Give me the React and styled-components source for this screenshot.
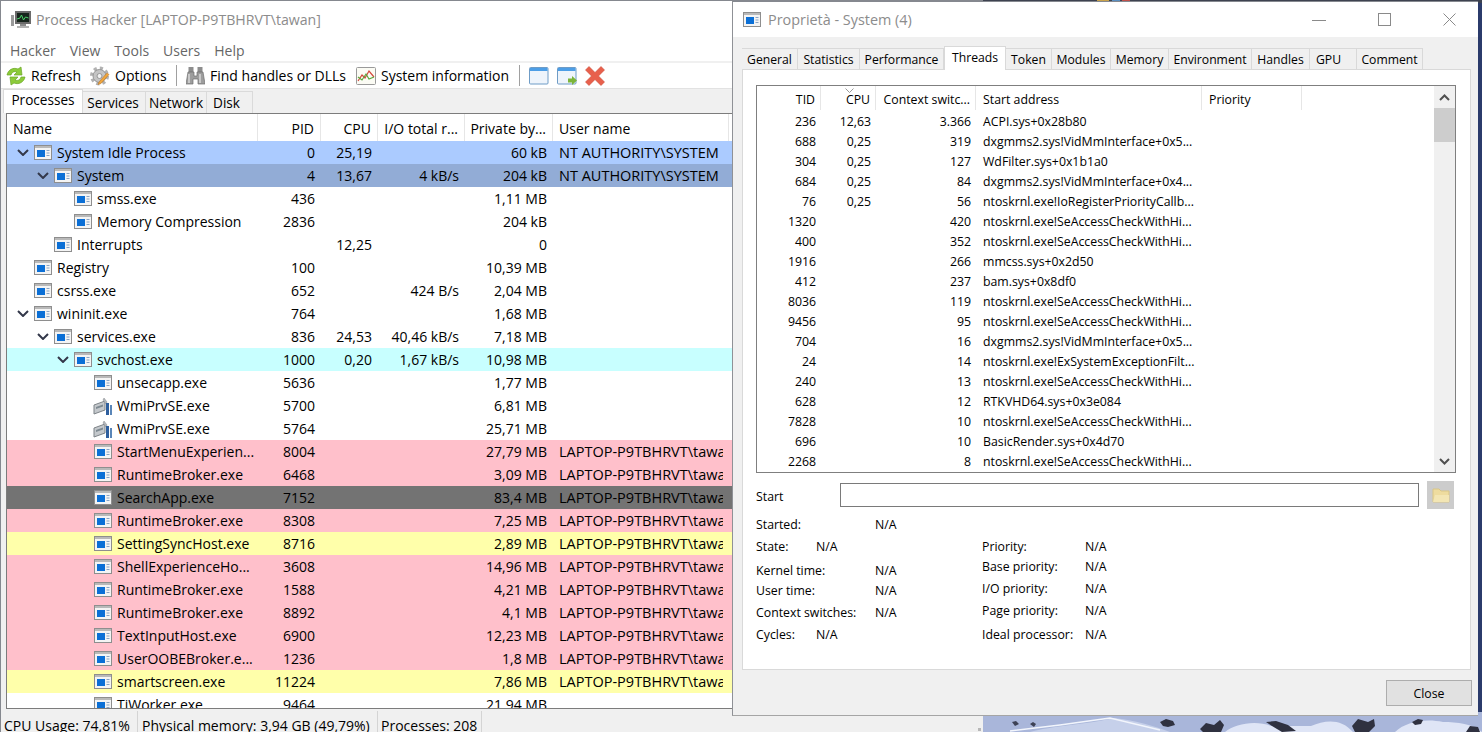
import styled, { createGlobalStyle } from "styled-components";

const GlobalStyle = createGlobalStyle`
  html, body {
    margin: 0;
    padding: 0;
    overflow: hidden;
    background: #2b3b6b;
  }
  * {
    box-sizing: border-box;
  }
`;

const UI_FONT = `"Open Sans", "Noto Sans", "Liberation Sans", sans-serif`;

const Desktop = styled.div`
  position: relative;
  width: 1482px;
  height: 732px;
  overflow: hidden;
  font-family: ${UI_FONT};
  color: #000;
`;

const Wallpaper = styled.svg`
  position: absolute;
  inset: 0;
`;

/* main window */
const MainWindow = styled.div`
  position: absolute;
  left: 0;
  top: 0;
  width: 983px;
  height: 732px;
  display: flex;
  flex-direction: column;
  background: #f0f0f0;
  border-top: 1px solid #85888f;
  border-left: 1px solid #85888f;
  font-size: 14px;
`;

const TitleBar = styled.div`
  height: ${(p) => p.$h}px;
  flex: none;
  display: flex;
  align-items: center;
  background: #fff;
  color: #8c8c8c;
  font-size: ${(p) => p.$size}px;
  padding-left: ${(p) => p.$pad}px;
  padding-bottom: ${(p) => p.$bottom}px;
  gap: ${(p) => p.$gap}px;
`;

const MenuBar = styled.div`
  height: 23px;
  flex: none;
  display: flex;
  align-items: center;
  background: #fff;
  padding: 2px 0 0 9px;
  gap: 14px;
  color: #666;
  margin-bottom: 2px;
`;

const Toolbar = styled.div`
  height: 26px;
  flex: none;
  display: flex;
  align-items: center;
  background: #fff;
  border-bottom: 1px solid #e2e2e2;
  padding-left: 5px;
`;

const ToolItem = styled.div`
  display: flex;
  align-items: center;
  gap: 5px;
  width: ${(p) => p.$w}px;
  flex: none;
  white-space: nowrap;
`;

const ToolSep = styled.div`
  width: 1px;
  height: 21px;
  background: #a0a0a0;
  flex: none;
  margin-right: ${(p) => p.$right}px;
`;

const MainTabs = styled.div`
  height: 24px;
  flex: none;
  display: flex;
  align-items: flex-end;
  padding-left: 2px;
`;

const MainTab = styled.div`
  height: ${(p) => (p.$active ? 24 : 22)}px;
  width: ${(p) => p.$w}px;
  flex: none;
  display: flex;
  align-items: center;
  justify-content: center;
  padding-bottom: ${(p) => (p.$active ? 4 : 1)}px;
  padding-right: ${(p) => p.$right || 0}px;
  background: ${(p) => (p.$active ? "#fff" : "#f0f0f0")};
  border: 1px solid #dadada;
  border-bottom: none;
  border-left-width: ${(p) => (p.$active ? 1 : 0)}px;
  font-size: 13.6px;
`;

const Tree = styled.div`
  flex: 1;
  min-height: 0;
  margin-left: 5px;
  background: #fff;
  border-top: 1px solid #7c7c7c;
  border-left: 1px solid #7c7c7c;
  border-bottom: 1px solid #7c7c7c;
  overflow: hidden;
`;

const TREE_COLS = "251px 63px 57px 87px 88px 176px 1fr";

const TreeHead = styled.div`
  display: grid;
  grid-template-columns: ${TREE_COLS};
  height: 27px;
`;

const HeadCell = styled.div`
  display: flex;
  align-items: center;
  justify-content: ${(p) => (p.$left ? "flex-start" : "flex-end")};
  padding: 2px 6px 0;
  border-right: 1px solid #e6e6e6;
  white-space: nowrap;
  overflow: hidden;
`;

const TreeRow = styled.div`
  display: grid;
  grid-template-columns: ${TREE_COLS};
  height: 23px;
  background: ${(p) => p.$bg};
`;

const NameCell = styled.div`
  display: flex;
  align-items: center;
  padding-left: ${(p) => 8 + p.$level * 20}px;
  white-space: nowrap;
  overflow: hidden;
`;

const ArrowSlot = styled.div`
  width: 19px;
  flex: none;
  display: flex;
  align-items: center;
`;

const NameText = styled.span`
  margin-left: 5px;
`;

const ValueCell = styled.div`
  display: flex;
  align-items: center;
  justify-content: ${(p) => (p.$left ? "flex-start" : "flex-end")};
  padding: 0 6px;
  white-space: nowrap;
  overflow: hidden;
`;

const UserText = styled.span`
  display: block;
  width: 164px;
  overflow: hidden;
  font-size: 14.5px;
`;

const StatusBar = styled.div`
  height: 23px;
  flex: none;
  position: relative;
  display: flex;
  padding-top: 2px;
`;

const StatusCell = styled.div`
  width: ${(p) => p.$w}px;
  flex: none;
  height: 21px;
  padding: 6px 0 0 ${(p) => p.$pad}px;
  line-height: 18px;
  border-right: 1px solid #d4d4d4;
  white-space: nowrap;
  overflow: hidden;
`;

const Grip = styled.div`
  position: absolute;
  right: 2px;
  bottom: 1px;
  width: 3px;
  height: 3px;
  background: #b8b8b8;
`;

/* properties window */
const PropsWindow = styled.div`
  position: absolute;
  left: 732px;
  top: 1px;
  width: 746px;
  height: 715px;
  display: flex;
  flex-direction: column;
  background: #f0f0f0;
  border-left: 1px solid #8f9196;
  border-top: 1px solid #85888f;
  border-bottom: 1px solid #a5a5a5;
  font-size: 12.3px;
`;

const WinTitle = styled.span`
  flex: 1;
`;

const WinButton = styled.div`
  width: 58px;
  flex: none;
  display: flex;
  justify-content: center;
`;

const PropTabs = styled.div`
  display: flex;
  align-items: flex-end;
  height: 32px;
  padding-left: 9px;
  flex: none;
  position: relative;
  z-index: 1;
`;

const PropTab = styled.div`
  height: ${(p) => (p.$active ? 24 : 21)}px;
  width: ${(p) => p.$w}px;
  margin-bottom: ${(p) => (p.$active ? -1 : 0)}px;
  flex: none;
  display: flex;
  align-items: center;
  justify-content: ${(p) => (p.$start ? "flex-start" : "center")};
  padding-left: ${(p) => (p.$start ? 6 : 0)}px;
  padding-bottom: ${(p) => (p.$active ? 3 : 0)}px;
  background: ${(p) => (p.$active ? "#fff" : "#f0f0f0")};
  border: 1px solid #d9d9d9;
  border-left-width: ${(p) => (p.$active ? 1 : 0)}px;
  border-bottom: none;
  font-size: 12.2px;
`;

const PropPanel = styled.div`
  height: 601px;
  flex: none;
  margin: 0 7px 0 9px;
  padding: 15px 14px 0 13px;
  background: #fff;
  border: 1px solid #d9d9d9;
`;

const ThreadBox = styled.div`
  height: 388px;
  display: flex;
  border: 1px solid #7f7f7f;
`;

const ThreadList = styled.div`
  flex: 1;
  min-width: 0;
  overflow: hidden;
`;

const THREAD_COLS = "64px 55px 100px 226px 100px";

const ThreadHead = styled.div`
  display: grid;
  grid-template-columns: ${THREAD_COLS};
  height: 24px;
  margin-bottom: 1px;
  position: relative;
`;

const ThreadHeadCell = styled.div`
  display: flex;
  align-items: center;
  justify-content: ${(p) => (p.$left ? "flex-start" : "flex-end")};
  padding: 2px 5px 0 7px;
  border-right: 1px solid #e6e6e6;
  white-space: nowrap;
  overflow: hidden;
`;

const SortMark = styled.svg`
  position: absolute;
  left: 88px;
  top: 2px;
`;

const ThreadRow = styled.div`
  display: grid;
  grid-template-columns: ${THREAD_COLS};
  height: 20px;
`;

const ThreadCell = styled.div`
  display: flex;
  align-items: center;
  justify-content: ${(p) => (p.$left ? "flex-start" : "flex-end")};
  padding: 0 5px 0 7px;
  white-space: nowrap;
  overflow: hidden;
`;

const ScrollTrack = styled.div`
  width: 21px;
  flex: none;
  display: flex;
  flex-direction: column;
  background: #f0f0f0;
`;

const ScrollEnd = styled.div`
  height: 22px;
  flex: none;
  display: flex;
  align-items: center;
  justify-content: center;
`;

const ScrollThumb = styled.div`
  height: 34px;
  flex: none;
  background: #cdcdcd;
`;

const ScrollSpace = styled.div`
  flex: 1;
`;

const StartRow = styled.div`
  display: flex;
  align-items: center;
  height: 28px;
  margin-top: 8px;
`;

const StartLabel = styled.div`
  width: 84px;
  flex: none;
  padding-top: 2px;
`;

const StartInput = styled.div`
  width: 579px;
  height: 24px;
  flex: none;
  border: 1px solid #7a7a7a;
`;

const FolderButton = styled.div`
  width: 27px;
  height: 28px;
  flex: none;
  margin-left: 8px;
  display: flex;
  align-items: center;
  justify-content: center;
  background: #cccccc;
`;

const Details = styled.div`
  display: flex;
  margin-top: 5px;
`;

const DetailColumn = styled.div`
  width: ${(p) => p.$w}px;
  flex: none;
  padding-top: ${(p) => p.$top}px;
`;

const DetailRow = styled.div`
  display: flex;
  align-items: center;
  height: 20px;
  margin-top: ${(p) => p.$gap}px;
  white-space: nowrap;
`;

const DetailLabel = styled.div`
  width: ${(p) => p.$w}px;
  flex: none;
`;

const Footer = styled.div`
  flex: 1;
  display: flex;
  justify-content: flex-end;
  padding: 10px 6px 0 0;
`;

const CloseButton = styled.div`
  width: 86px;
  height: 26px;
  display: flex;
  align-items: center;
  justify-content: center;
  background: #e1e1e1;
  border: 1px solid #adadad;
`;

/* drawings */
const ProcessIcon = () => (
  <svg width="18" height="15" viewBox="0 0 18 15" style={{ flex: "none" }}>
    <rect x="0.5" y="0.5" width="17" height="14" fill="#f4f4f4" stroke="#8e8e8e" />
    <rect x="1" y="1" width="16" height="2" fill="#b9b9b9" />
    <rect x="3" y="5" width="8" height="7" fill="#0b6fd6" />
    <path d="M12.5 5.500h3M12.5 8h3M12.5 10.500h3" stroke="#8aa4c4" />
  </svg>
);

const WmiIcon = () => (
  <svg width="20" height="20" viewBox="0 0 20 20" style={{ flex: "none", marginRight: "-1px", marginLeft: "-1px" }}>
    <path d="M1 9l11-4v9L1 18z" fill="#c4c8cc" stroke="#7d8388" />
    <path d="M3 11l7-2.500v2L3 13z" fill="#7e8a92" />
    <path d="M11 2l3 4-1 2-3-4z" fill="#b4b8bc" stroke="#85898d" strokeWidth="0.5" />
    <rect x="13" y="7" width="3" height="12" fill="#2f5f9e" />
    <rect x="17" y="9" width="2" height="10" fill="#5a86b8" />
  </svg>
);

const Chevron = ({ color = "#33384a" }) => (
  <svg width="12" height="7" viewBox="0 0 12 7" style={{ marginLeft: "2px" }}>
    <path d="M1 1l5 5 5-5" fill="none" stroke={color} strokeWidth="2" />
  </svg>
);

const AppIcon = () => (
  <svg width="20" height="19" viewBox="0 0 20 19" style={{ flex: "none" }}>
    <rect x="0" y="5" width="3" height="11" fill="#9a9a9a" />
    <rect x="4" y="1" width="16" height="13" fill="#6b6b6b" />
    <rect x="6" y="3" width="12" height="9" fill="#16251c" />
    <path d="M6 9l3-1 1.500-3 2 5 2-3 3 1" fill="none" stroke="#4bd06a" strokeWidth="1" />
    <rect x="9" y="14" width="6" height="2" fill="#8a8a8a" />
    <rect x="6" y="16" width="12" height="2" fill="#b3b3b3" />
  </svg>
);

const RefreshIcon = () => (
  <svg width="20" height="20" viewBox="0 0 20 20" style={{ flex: "none" }}>
    <path d="M1 9C2 4 7 1 12 3l3-2 1 8-8 0 3-3C8 5 6 6 5 9z" fill="#8ccb3a" stroke="#6aa626" strokeWidth="0.7" />
    <path d="M19 11c-1 5-6 8-11 6l-3 2-1-8 8 0-3 3c3 1 5 0 6-3z" fill="#8ccb3a" stroke="#6aa626" strokeWidth="0.7" />
  </svg>
);

const GearIcon = () => (
  <svg width="20" height="20" viewBox="0 0 20 20" style={{ flex: "none" }}>
    <circle cx="9.500" cy="10" r="7.500" fill="none" stroke="#b2b2b2" strokeWidth="4" strokeDasharray="3 2.900" />
    <circle cx="9.500" cy="10" r="6.500" fill="#c4c4c4" stroke="#969696" />
    <circle cx="9.500" cy="10" r="2.500" fill="#f1f1f1" stroke="#969696" />
    <path d="M9 16l8-9 2 1.500-8 9-3 1z" fill="#f0a63c" stroke="#b9752a" strokeWidth="0.6" />
  </svg>
);

const BinocularsIcon = () => (
  <svg width="19" height="20" viewBox="0 0 19 20" style={{ flex: "none" }}>
    <rect x="2.500" y="1" width="5" height="5" fill="#8d8d8d" />
    <rect x="11.500" y="1" width="5" height="5" fill="#8d8d8d" />
    <path d="M2 6h6v4h3V6h6l2 12h-7v-5H7v5H0z" fill="#9d9d9d" stroke="#6f6f6f" strokeWidth="0.7" />
    <rect x="2" y="8" width="2" height="9" fill="#c9c9c9" />
    <rect x="13" y="8" width="2" height="9" fill="#c9c9c9" />
  </svg>
);

const ChartIcon = () => (
  <svg width="20" height="20" viewBox="0 0 20 20" style={{ flex: "none" }}>
    <rect x="0.500" y="1.500" width="19" height="17" rx="1" fill="#fbfbf4" stroke="#9a9a9a" />
    <path d="M2 15l4-6 3 3 4-7 5 6" fill="none" stroke="#d4483c" strokeWidth="1.200" />
    <path d="M2 11l4 3 4-6 3 5 5-2" fill="none" stroke="#5aa83c" strokeWidth="1.200" />
  </svg>
);

const WindowIcon = ({ arrow }) => (
  <svg width="20" height="18" viewBox="0 0 20 18" style={{ flex: "none" }}>
    <rect x="0.500" y="0.500" width="18.500" height="16.500" rx="1" fill="#eef4fb" stroke="#6f9cc6" />
    <rect x="1" y="1" width="17.500" height="3" fill="#4d9ee6" />
    {arrow && <path d="M11 11.500h4V9l5 4.500-5 4.500v-2.500h-4z" fill="#7cb53a" />}
  </svg>
);

const RedXIcon = () => (
  <svg width="20" height="20" viewBox="0 0 20 20" style={{ flex: "none" }}>
    <path
      d="M4 0.500L10 6.500 16 0.500 19.500 4 13.500 10 19.500 16 16 19.500 10 13.500 4 19.500 0.500 16 6.500 10 0.500 4z"
      fill="#e8604c"
      stroke="#cf4a38"
      strokeWidth="0.6"
    />
  </svg>
);

const FolderIcon = () => (
  <svg width="18" height="16" viewBox="0 0 18 16">
    <path d="M1 2h6l2 2h8v11H1z" fill="#eedc9f" stroke="#d9c687" />
    <path d="M1 15l2-7h14v7z" fill="#f3e6b4" />
  </svg>
);

const PINK = "#ffc0cb";
const YELLOW = "#ffffaa";
const USER = "LAPTOP-P9TBHRVT\\tawan";
const NT = "NT AUTHORITY\\SYSTEM";

const processes = [
  { name: "System Idle Process", level: 0, open: true, pid: "0", cpu: "25,19", mem: "60 kB", user: NT, bg: "#abcbff" },
  { name: "System", level: 1, open: true, pid: "4", cpu: "13,67", io: "4 kB/s", mem: "204 kB", user: NT, bg: "#92acd6" },
  { name: "smss.exe", level: 2, pid: "436", mem: "1,11 MB" },
  { name: "Memory Compression", level: 2, pid: "2836", mem: "204 kB" },
  { name: "Interrupts", level: 1, cpu: "12,25", mem: "0" },
  { name: "Registry", level: 0, pid: "100", mem: "10,39 MB" },
  { name: "csrss.exe", level: 0, pid: "652", io: "424 B/s", mem: "2,04 MB" },
  { name: "wininit.exe", level: 0, open: true, pid: "764", mem: "1,68 MB" },
  { name: "services.exe", level: 1, open: true, pid: "836", cpu: "24,53", io: "40,46 kB/s", mem: "7,18 MB" },
  { name: "svchost.exe", level: 2, open: true, pid: "1000", cpu: "0,20", io: "1,67 kB/s", mem: "10,98 MB", bg: "#c8ffff" },
  { name: "unsecapp.exe", level: 3, pid: "5636", mem: "1,77 MB" },
  { name: "WmiPrvSE.exe", level: 3, wmi: true, pid: "5700", mem: "6,81 MB" },
  { name: "WmiPrvSE.exe", level: 3, wmi: true, pid: "5764", mem: "25,71 MB" },
  { name: "StartMenuExperien...", level: 3, pid: "8004", mem: "27,79 MB", user: USER, bg: PINK },
  { name: "RuntimeBroker.exe", level: 3, pid: "6468", mem: "3,09 MB", user: USER, bg: PINK },
  { name: "SearchApp.exe", level: 3, pid: "7152", mem: "83,4 MB", user: USER, bg: "#737373" },
  { name: "RuntimeBroker.exe", level: 3, pid: "8308", mem: "7,25 MB", user: USER, bg: PINK },
  { name: "SettingSyncHost.exe", level: 3, pid: "8716", mem: "2,89 MB", user: USER, bg: YELLOW },
  { name: "ShellExperienceHo...", level: 3, pid: "3608", mem: "14,96 MB", user: USER, bg: PINK },
  { name: "RuntimeBroker.exe", level: 3, pid: "1588", mem: "4,21 MB", user: USER, bg: PINK },
  { name: "RuntimeBroker.exe", level: 3, pid: "8892", mem: "4,1 MB", user: USER, bg: PINK },
  { name: "TextInputHost.exe", level: 3, pid: "6900", mem: "12,23 MB", user: USER, bg: PINK },
  { name: "UserOOBEBroker.e...", level: 3, pid: "1236", mem: "1,8 MB", user: USER, bg: PINK },
  { name: "smartscreen.exe", level: 3, pid: "11224", mem: "7,86 MB", user: USER, bg: YELLOW },
  { name: "TiWorker.exe", level: 3, pid: "9464", mem: "21,94 MB" },
];

const SEAC = "ntoskrnl.exe!SeAccessCheckWithHi...";

const threads = [
  ["236", "12,63", "3.366", "ACPI.sys+0x28b80"],
  ["688", "0,25", "319", "dxgmms2.sys!VidMmInterface+0x5..."],
  ["304", "0,25", "127", "WdFilter.sys+0x1b1a0"],
  ["684", "0,25", "84", "dxgmms2.sys!VidMmInterface+0x4..."],
  ["76", "0,25", "56", "ntoskrnl.exe!IoRegisterPriorityCallb..."],
  ["1320", "", "420", SEAC],
  ["400", "", "352", SEAC],
  ["1916", "", "266", "mmcss.sys+0x2d50"],
  ["412", "", "237", "bam.sys+0x8df0"],
  ["8036", "", "119", SEAC],
  ["9456", "", "95", SEAC],
  ["704", "", "16", "dxgmms2.sys!VidMmInterface+0x5..."],
  ["24", "", "14", "ntoskrnl.exe!ExSystemExceptionFilt..."],
  ["240", "", "13", SEAC],
  ["628", "", "12", "RTKVHD64.sys+0x3e084"],
  ["7828", "", "10", SEAC],
  ["696", "", "10", "BasicRender.sys+0x4d70"],
  ["2268", "", "8", SEAC],
];

const propTabs = [
  { label: "General", w: 56 },
  { label: "Statistics", w: 62 },
  { label: "Performance", w: 84 },
  { label: "Threads", w: 62, active: true },
  { label: "Token", w: 46 },
  { label: "Modules", w: 59 },
  { label: "Memory", w: 58 },
  { label: "Environment", w: 83 },
  { label: "Handles", w: 58 },
  { label: "GPU", w: 47, start: true },
  { label: "Comment", w: 66 },
];

const leftDetails = [
  ["Started:", 119, 0],
  ["State:", 60, 2],
  ["Kernel time:", 119, 4],
  ["User time:", 119, 0],
  ["Context switches:", 119, 2],
  ["Cycles:", 60, 2],
];

const rightDetails = [
  ["Priority:", 103, 0],
  ["Base priority:", 103, 0],
  ["I/O priority:", 103, 2],
  ["Page priority:", 103, 2],
  ["Ideal processor:", 103, 4],
];

const App = () => {
  return (
    <Desktop>
      <GlobalStyle />
      <Wallpaper width="1482" height="732" viewBox="0 0 1482 732">
        <rect width="1482" height="732" fill="#2b3b6b" />
        <rect width="1482" height="3" fill="#3d4250" />
        <rect x="1097" width="12" height="3" fill="#c9a24a" />
        <rect x="1112" width="8" height="3" fill="#5a8fc0" />
        <rect x="1122" width="8" height="3" fill="#c0504a" />
        <rect x="983" y="712" width="499" height="20" fill="#a9b6da" />
        <path d="M1030 732c20-6 60-8 84-14 20 2 40 8 56 14z" fill="#c6d0ea" />
        <path d="M1010 731l50-6 50-7 50 12" fill="none" stroke="#f2f5fc" strokeWidth="1.500" />
        <path d="M1225 732c10-8 30-12 46-6l40 0c14-6 30-8 42 6z" fill="#dfe5f6" />
        <path d="M1395 732c10-10 30-14 48-10 14 0 30 2 39 10z" fill="#dfe5f6" />
        <path d="M1160 722l6-3 7 2 2 4-7 2-5-1zM1200 729l6-6 8 2 6-5 4 5-3 7h-18zM1266 722l10-1 12 4 8 6-14 1-10-6zM1352 726l6-7 10 3 6-3 1 7-6 6h-14zM1412 722l6-3 5 1-2 4-6 1zM1466 732l4-6 8 1 2 5z" fill="#2f3140" />
        <path d="M1012 722l4-1 3 3-4 2zM1030 724l3-2 3 2-2 3z" fill="#3d4154" />
      </Wallpaper>

      <MainWindow>
        <TitleBar $h={37} $size={14.15} $pad={10} $gap={5} $bottom={1}>
          <AppIcon />
          <span>Process Hacker [LAPTOP-P9TBHRVT\tawan]</span>
        </TitleBar>
        <MenuBar>
          <span>Hacker</span>
          <span>View</span>
          <span>Tools</span>
          <span>Users</span>
          <span>Help</span>
        </MenuBar>
        <Toolbar>
          <ToolItem $w={84}>
            <RefreshIcon />
            Refresh
          </ToolItem>
          <ToolItem $w={86}>
            <GearIcon />
            Options
          </ToolItem>
          <ToolSep $right={9} />
          <ToolItem $w={170}>
            <BinocularsIcon />
            Find handles or DLLs
          </ToolItem>
          <ToolItem $w={163}>
            <ChartIcon />
            System information
          </ToolItem>
          <ToolSep $right={9} />
          <ToolItem $w={28}>
            <WindowIcon />
          </ToolItem>
          <ToolItem $w={28}>
            <WindowIcon arrow />
          </ToolItem>
          <ToolItem $w={28}>
            <RedXIcon />
          </ToolItem>
        </Toolbar>
        <MainTabs>
          <MainTab $active $w={80}>Processes</MainTab>
          <MainTab $w={63} $right={2}>Services</MainTab>
          <MainTab $w={61}>Network</MainTab>
          <MainTab $w={46} $right={6}>Disk</MainTab>
        </MainTabs>
        <Tree>
          <TreeHead>
            <HeadCell $left>Name</HeadCell>
            <HeadCell>PID</HeadCell>
            <HeadCell>CPU</HeadCell>
            <HeadCell>I/O total r...</HeadCell>
            <HeadCell>Private by...</HeadCell>
            <HeadCell $left>User name</HeadCell>
            <span />
          </TreeHead>
          {processes.map((p, i) => (
            <TreeRow key={i} $bg={p.bg || "#fff"}>
              <NameCell $level={p.level}>
                <ArrowSlot>{p.open && <Chevron />}</ArrowSlot>
                {p.wmi ? <WmiIcon /> : <ProcessIcon />}
                <NameText>{p.name}</NameText>
              </NameCell>
              <ValueCell>{p.pid}</ValueCell>
              <ValueCell>{p.cpu}</ValueCell>
              <ValueCell>{p.io}</ValueCell>
              <ValueCell>{p.mem}</ValueCell>
              <ValueCell $left>
                <UserText>{p.user}</UserText>
              </ValueCell>
            </TreeRow>
          ))}
        </Tree>
        <StatusBar>
          <StatusCell $w={137} $pad={3}>CPU Usage: 74,81%</StatusCell>
          <StatusCell $w={240} $pad={4}>Physical memory: 3,94 GB (49,79%)</StatusCell>
          <StatusCell $w={104} $pad={3}>Processes: 208</StatusCell>
          <Grip />
        </StatusBar>
      </MainWindow>

      <PropsWindow>
        <TitleBar $h={35} $size={14.4} $pad={10} $gap={7} $bottom={0}>
          <ProcessIcon />
          <WinTitle>Proprietà - System (4)</WinTitle>
          <WinButton>
            <svg width="14" height="14" viewBox="0 0 14 14">
              <path d="M0 7.500h14" stroke="#8a8a8a" />
            </svg>
          </WinButton>
          <WinButton>
            <svg width="13" height="13" viewBox="0 0 13 13">
              <rect x="0.500" y="0.500" width="12" height="12" fill="none" stroke="#8a8a8a" />
            </svg>
          </WinButton>
          <WinButton>
            <svg width="13" height="13" viewBox="0 0 13 13">
              <path d="M0.500 0.500l12 12M12.500 0.500l-12 12" stroke="#8a8a8a" />
            </svg>
          </WinButton>
        </TitleBar>
        <PropTabs>
          {propTabs.map((t) => (
            <PropTab key={t.label} $w={t.w} $active={t.active} $start={t.start}>
              {t.label}
            </PropTab>
          ))}
        </PropTabs>
        <PropPanel>
          <ThreadBox>
            <ThreadList>
              <ThreadHead>
                <ThreadHeadCell>TID</ThreadHeadCell>
                <ThreadHeadCell>CPU</ThreadHeadCell>
                <ThreadHeadCell>Context switc...</ThreadHeadCell>
                <ThreadHeadCell $left>Start address</ThreadHeadCell>
                <ThreadHeadCell $left>Priority</ThreadHeadCell>
                <SortMark width="9" height="5" viewBox="0 0 9 5">
                  <path d="M0.500 0.500l4 4 4-4" fill="none" stroke="#9a9a9a" />
                </SortMark>
              </ThreadHead>
              {threads.map(([tid, cpu, ctx, addr], i) => (
                <ThreadRow key={i}>
                  <ThreadCell>{tid}</ThreadCell>
                  <ThreadCell>{cpu}</ThreadCell>
                  <ThreadCell>{ctx}</ThreadCell>
                  <ThreadCell $left>{addr}</ThreadCell>
                </ThreadRow>
              ))}
            </ThreadList>
            <ScrollTrack>
              <ScrollEnd>
                <svg width="11" height="7" viewBox="0 0 11 7">
                  <path d="M1 6l4.500-4.500L10 6" fill="none" stroke="#505050" strokeWidth="2" />
                </svg>
              </ScrollEnd>
              <ScrollThumb />
              <ScrollSpace />
              <ScrollEnd>
                <svg width="11" height="7" viewBox="0 0 11 7">
                  <path d="M1 1l4.500 4.500L10 1" fill="none" stroke="#505050" strokeWidth="2" />
                </svg>
              </ScrollEnd>
            </ScrollTrack>
          </ThreadBox>
          <StartRow>
            <StartLabel>Start</StartLabel>
            <StartInput />
            <FolderButton>
              <FolderIcon />
            </FolderButton>
          </StartRow>
          <Details>
            <DetailColumn $w={226} $top={0}>
              {leftDetails.map(([label, w, gap]) => (
                <DetailRow key={label} $gap={gap}>
                  <DetailLabel $w={w}>{label}</DetailLabel>
                  N/A
                </DetailRow>
              ))}
            </DetailColumn>
            <DetailColumn $w={300} $top={22}>
              {rightDetails.map(([label, w, gap]) => (
                <DetailRow key={label} $gap={gap}>
                  <DetailLabel $w={w}>{label}</DetailLabel>
                  N/A
                </DetailRow>
              ))}
            </DetailColumn>
          </Details>
        </PropPanel>
        <Footer>
          <CloseButton>Close</CloseButton>
        </Footer>
      </PropsWindow>
    </Desktop>
  );
};

export default App;
